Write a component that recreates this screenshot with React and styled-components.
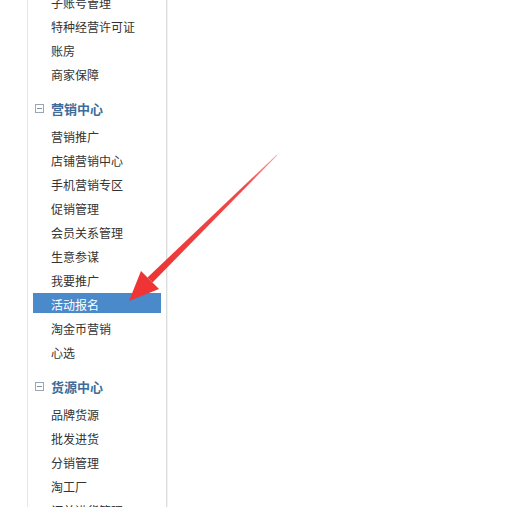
import React from 'react'
import styled, { createGlobalStyle } from 'styled-components'

const GlobalStyle = createGlobalStyle`
  html, body {
    margin: 0;
    padding: 0;
    background: #fff;
    overflow: hidden;
  }
  body {
    font-family: "Noto Sans CJK SC", "Noto Sans", sans-serif;
  }
`

const groups = [
  {
    title: null,
    items: ['子账号管理', '特种经营许可证', '账房', '商家保障'],
  },
  {
    title: '营销中心',
    items: ['营销推广', '店铺营销中心', '手机营销专区', '促销管理', '会员关系管理', '生意参谋', '我要推广', '活动报名', '淘金币营销', '心选'],
  },
  {
    title: '货源中心',
    items: ['品牌货源', '批发进货', '分销管理', '淘工厂', '订单进货管理'],
  },
]

const App = () => (
  <Page>
    <GlobalStyle />
    <Sidebar>
      {groups.map((g, i) => (
        <Group key={i}>
          {g.title && (
            <GroupTitle>
              <Toggle />
              {g.title}
            </GroupTitle>
          )}
          {g.items.map(item => (
            <Item key={item} $active={item === '活动报名'}>{item}</Item>
          ))}
        </Group>
      ))}
    </Sidebar>
    <Arrow viewBox="0 0 517 507" width="517" height="507">
      <defs>
        <linearGradient id="shaft" x1="277" y1="155" x2="150" y2="280" gradientUnits="userSpaceOnUse">
          <stop offset="0" stopColor="#f5a5a5" />
          <stop offset="0.25" stopColor="#ee4a4a" />
          <stop offset="1" stopColor="#ee3434" />
        </linearGradient>
      </defs>
      <polygon points="276.7,154.7 277.3,155.3 152.5,282.5 147.5,277.5" fill="url(#shaft)" />
      <polygon points="129,301 159,289 141,271" fill="#ee3434" />
    </Arrow>
  </Page>
)

const Page = styled.div`
  position: relative;
  width: 517px;
  height: 507px;
  overflow: hidden;
`

const Sidebar = styled.div`
  margin-left: 27px;
  margin-top: -10px;
  width: 140px;
  min-height: 540px;
  border-left: 1px solid #e6e6e6;
  border-right: 1px solid #dcdcdc;
  box-shadow: 1px 0 0 #f2f2f2;
  padding: 0 5px;
  box-sizing: border-box;
`

const Group = styled.div`
  & + & {
    margin-top: 10px;
  }
`

const GroupTitle = styled.div`
  display: flex;
  align-items: center;
  height: 24px;
  margin-bottom: 4px;
  padding-left: 2px;
  font-size: 13px;
  font-weight: bold;
  color: #3d6c99;
`

const Toggle = styled.span`
  position: relative;
  width: 7px;
  height: 7px;
  border: 1px solid #9aa6b2;
  margin-right: 7px;
  &::after {
    content: '';
    position: absolute;
    left: 1px;
    right: 1px;
    top: 3px;
    height: 1px;
    background: #8090a0;
  }
`

const Item = styled.div`
  height: 24px;
  display: flex;
  align-items: center;
  font-size: 12px;
  color: ${p => (p.$active ? '#fff' : '#333')};
  padding-left: 18px;
  background: ${p => (p.$active ? 'linear-gradient(#fff 0 1px, #4a8acb 1px 21px, #fff 21px)' : 'none')};
`

const Arrow = styled.svg`
  position: absolute;
  left: 0;
  top: 0;
  pointer-events: none;
`

export default App
